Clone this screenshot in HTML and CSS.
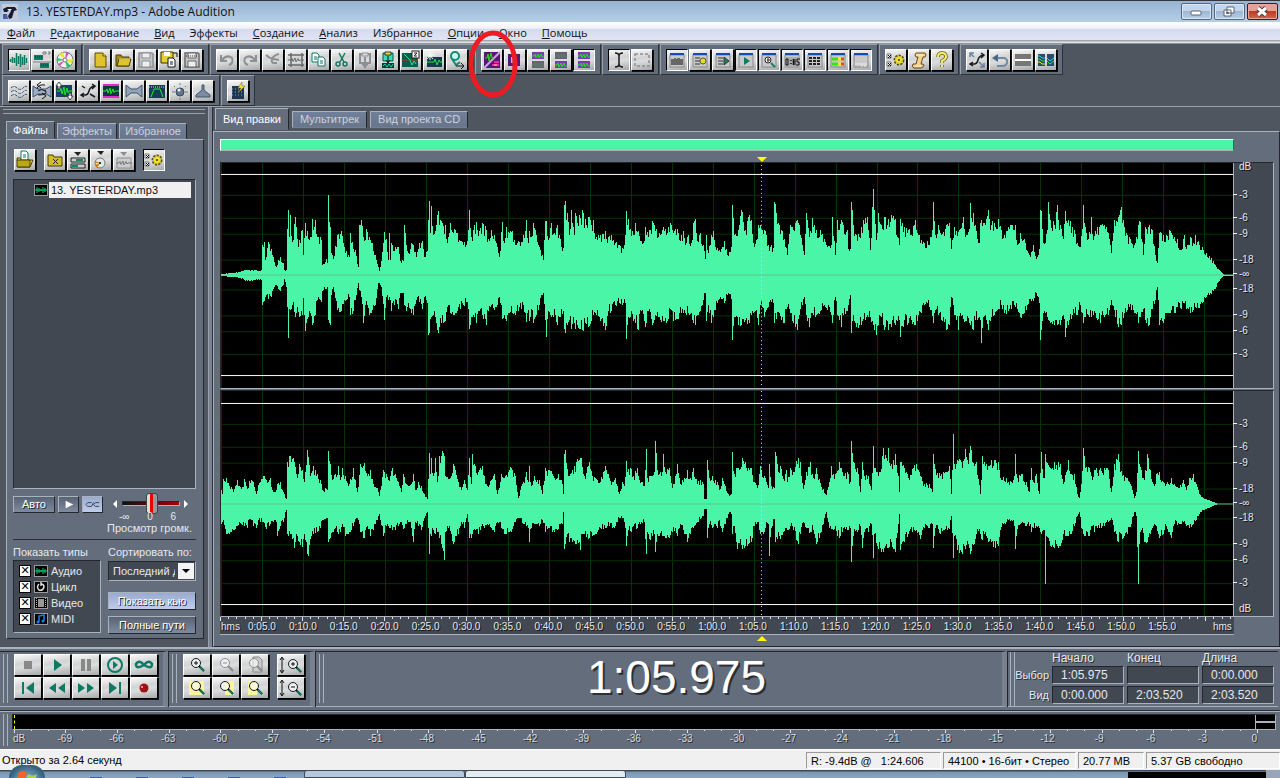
FILE: index.html
```html
<!DOCTYPE html>
<html lang="ru">
<head>
<meta charset="utf-8">
<title>13. YESTERDAY.mp3 - Adobe Audition</title>
<link rel="stylesheet" href="styles.css">
</head>
<body>
<header class="titlebar">
  <svg class="app-icon" viewBox="0 0 16 16"><rect width="16" height="16" fill="#c5ccd9"/><path d="M1 5l4-2h8l2 3-3 1-2 7-3 1-1-3 3-5-2-1-2 2-3 0z" fill="#151b36"/><path d="M1 10h4l1 5H1z" fill="#4a5d9b"/><path d="M5 5l5 0-2 2z" fill="#fff"/></svg>
  <h1 class="title">13. YESTERDAY.mp3 - Adobe Audition</h1>
  <div class="window-buttons">
    <button class="win" aria-label="Свернуть"><svg viewBox="0 0 28 15"><rect x="9" y="7" width="10" height="4" rx="1" fill="#fff" stroke="#5b6376"/></svg></button>
    <button class="win" aria-label="Развернуть"><svg viewBox="0 0 28 15"><path d="M12 3h7v6h-7zM9 6h7v6H9z" fill="#fff" stroke="#5b6376"/><path d="M11.500 8.500h2v1h-2z" stroke="#5b6376"/></svg></button>
    <button class="win win-close" aria-label="Закрыть"><svg viewBox="0 0 28 15"><path d="M10 4l8 7M18 4l-8 7" stroke="#5c3038" stroke-width="5"/><path d="M10 4l8 7M18 4l-8 7" stroke="#fff" stroke-width="3"/></svg></button>
  </div>
</header>
<nav class="menu">
  <button><u>Ф</u>айл</button><button><u>Р</u>едактирование</button><button><u>В</u>ид</button><button>Эффекты</button><button><u>С</u>оздание</button><button><u>А</u>нализ</button><button>Избранное</button><button><u>О</u>пции</button><button><u>О</u>кно</button><button><u>П</u>омощь</button>
</nav>
<div class="toolbars">
  <div class="toolbar" id="toolbar-main"></div>
  <div class="toolbar" id="toolbar-effects"></div>
  <svg class="callout" viewBox="0 0 50 68"><ellipse cx="25" cy="34" rx="22" ry="31" fill="none" stroke="#ed1c24" stroke-width="5"/></svg>
</div>
<main class="workspace">
  <aside class="organizer">
    <div class="grip-h"></div>
    <div class="tabs side-tabs"><button class="tab active">Файлы</button><button class="tab">Эффекты</button><button class="tab">Избранное</button></div>
    <div class="side-body">
      <div class="file-tools" id="file-tools"></div>
      <div class="file-list"><div class="file-row"><span class="type-icon" data-icon="audio"></span><span class="file-name">13. YESTERDAY.mp3</span></div></div>
      <div class="preview">
        <button class="flat auto">Авто</button>
        <button class="flat play" aria-label="Воспроизвести"><svg viewBox="0 0 20 14"><path d="M7 3l8 4-8 4z" fill="#fff"/></svg></button>
        <button class="flat bright loop" aria-label="Цикл"><svg viewBox="0 0 20 14"><path d="M9 5H5L3 7l2 2h4M9 9l2-4M17 5h-4l-2 2 2 2h4" fill="none" stroke="#34415f"/></svg></button>
        <div class="volume">
          <div class="volume-row"><span class="arrow left"></span><input type="range" id="vol" min="0" max="100" value="54"><span class="arrow right"></span></div>
          <div class="volume-marks"><span>-∞</span><span>0</span><span>6</span></div>
          <label for="vol">Просмотр громк.</label>
        </div>
      </div>
      <div class="filters">
        <fieldset class="types">
          <legend>Показать типы</legend>
          <div class="type-box">
            <label><input type="checkbox" checked><span class="type-icon" data-icon="audio"></span>Аудио</label>
            <label><input type="checkbox" checked><span class="type-icon" data-icon="loop"></span>Цикл</label>
            <label><input type="checkbox" checked><span class="type-icon" data-icon="video"></span>Видео</label>
            <label><input type="checkbox" checked><span class="type-icon" data-icon="midi"></span>MIDI</label>
          </div>
        </fieldset>
        <div class="sort">
          <label for="sort">Сортировать по:</label>
          <div class="select-wrap"><select id="sort"><option>Последний доступ</option></select><span class="select-arrow"></span></div>
          <button class="flat bright">Показать кью</button>
          <button class="flat">Полные пути</button>
        </div>
      </div>
    </div>
  </aside>
  <div class="splitter"></div>
  <section class="editor">
    <div class="tabs view-tabs"><button class="tab active">Вид правки</button><button class="tab">Мультитрек</button><button class="tab">Вид проекта CD</button></div>
    <div class="view">
      <div class="overview"></div>
      <div class="marker-row"><span class="marker down"></span></div>
      <div class="tracks">
        <div class="track"><svg class="wave" id="wave-left" viewBox="0 0 1012 226" preserveAspectRatio="none"></svg><div class="db-scale upper" id="scale-left"></div></div>
        <div class="track"><svg class="wave" id="wave-right" viewBox="0 0 1012 226" preserveAspectRatio="none"></svg><div class="db-scale lower" id="scale-right"></div></div>
      </div>
      <div class="time-ruler"><svg id="time-ticks" viewBox="0 0 1012 5" preserveAspectRatio="none"></svg><div class="time-labels" id="time-labels"></div></div>
      <div class="marker-row"><span class="marker up"></span></div>
    </div>
  </section>
</main>
<section class="dock">
  <div class="panel"><span class="grip-v"></span><div class="transport" id="transport"></div></div>
  <div class="panel"><span class="grip-v"></span><div class="zooms" id="zooms"></div><div class="zooms-v" id="zooms-v"></div></div>
  <div class="panel clock-panel"><span class="grip-v"></span><output class="clock">1:05.975</output></div>
  <div class="panel selection-panel"><span class="grip-v"></span>
    <table class="selection">
      <tr><td></td><th id="c1">Начало</th><th id="c2">Конец</th><th id="c3">Длина</th></tr>
      <tr><th class="side" id="r1">Выбор</th><td><input aria-labelledby="r1 c1" value="1:05.975"></td><td><input aria-labelledby="r1 c2" value=""></td><td><input aria-labelledby="r1 c3" value="0:00.000"></td></tr>
      <tr><th class="side" id="r2">Вид</th><td><input aria-labelledby="r2 c1" value="0:00.000"></td><td><input aria-labelledby="r2 c2" value="2:03.520"></td><td><input aria-labelledby="r2 c3" value="2:03.520"></td></tr>
    </table>
  </div>
</section>
<section class="levels">
  <span class="grip-v"></span>
  <div class="level-body">
    <div class="meter"><span class="meter-start"></span><span class="clip"></span></div>
    <svg id="level-ticks" viewBox="0 0 1266 4" preserveAspectRatio="none"></svg>
    <div class="level-labels" id="level-labels"></div>
  </div>
</section>
<footer class="status">
  <span class="status-main">Открыто за 2.64 секунд</span>
  <span class="cell level">R: -9.4dB @ &nbsp; 1:24.606</span><span class="cell format">44100 • 16-бит • Стерео</span><span class="cell size">20.77 MB</span><span class="cell free">5.37 GB свободно</span>
</footer>
<div class="taskbar">
  <span class="orb"><svg viewBox="0 0 36 36"><path d="M9 8q5-4 9 0l-2 9q-5-3-9 0z" fill="#f0642c"/><path d="M19 9q5 3 9 0l-2 9q-5 3-9 0z" fill="#a9d24b"/></svg></span>
  <span class="quick"><i></i><i></i><i></i><i></i><i></i></span><span class="task"></span><span class="task lit"></span><span class="task-dots"></span><span class="tray"></span><span class="tray-end"></span>
</div>
<script src="app.js"></script>
</body>
</html>
```
FILE: styles.css
```css
* { box-sizing: border-box; }
body { margin: 0; height: 100vh; display: flex; flex-direction: column; overflow: hidden; background: #636d7b; color: #e6e9ee; font: 11px/12px "Liberation Sans", Arial, sans-serif; }
button, input, select { font: inherit; color: inherit; margin: 0; padding: 0; border: 0; background: none; border-radius: 0; }
svg { display: block; }

.titlebar { flex: none; display: flex; align-items: center; height: 22px; border-top: 1px solid #35363c; padding: 0 2px; background: linear-gradient(#96b3d2, #b6cee7); color: #111; }
.app-icon { width: 16px; height: 16px; }
.title { flex: 1; margin: 0 0 0 8px; font: 12px/18px "Open Sans", sans-serif; }
.window-buttons { display: flex; gap: 2px; }
.win { width: 31px; height: 17px; border: 1px solid #56677f; border-radius: 2px; box-shadow: inset 0 0 0 1px #d9e6f4; background: linear-gradient(#c3d5ea 45%, #9db7d4 50%, #b8d0e8); }
.win svg { width: 28px; height: 15px; }
.win-close { border-color: #4b1418; box-shadow: inset 0 0 0 1px #e7a99e; background: linear-gradient(#e0a395 45%, #bf3b24 50%, #cf6a4c); }

.menu { flex: none; display: flex; gap: 15px; height: 22px; padding: 0 7px; background: linear-gradient(#ffffff, #eef1f8 30%, #d5dbee 35%, #dfe4f5 85%, #a0a4ac 88%, #f2f2f2); color: #111; border-bottom: 1px solid #8e939a; }
.menu button { font: 11px/18px "Open Sans", sans-serif; white-space: nowrap; }

.toolbars { flex: none; position: relative; background: #505660; border-bottom: 1px solid #9aa1ab; }
.toolbar { display: flex; gap: 1px; padding-left: 2px; height: 31px; }
.group { display: flex; gap: 1px; height: 31px; padding: 4px 5px; border: 1px solid; border-color: #98a0ac #2d3138 #2d3138 #98a0ac; background: #636d7b; }
.tool { width: 22px; height: 22px; border: 1px solid; border-color: #fff #000 #000 #fff; background: linear-gradient(170deg, #f8f8f8, #d2d3d4 40%, #dcdddd 55%, #a8a9ab); box-shadow: 1px 1px 0 #111; }
.tool svg { width: 20px; height: 20px; }
.tool.on { border-color: #000 #fff #fff #000; box-shadow: none; }
.callout { position: absolute; left: 468px; top: -14px; width: 50px; height: 68px; z-index: 3; }

.workspace { flex: 1; min-height: 0; display: flex; background: #505660; }
.organizer { width: 208px; display: flex; flex-direction: column; padding: 2px 3px 8px 3px; }
.grip-h { flex: none; height: 5px; border: solid #9aa1ab; border-width: 1px 0; margin-bottom: 7px; }
.tabs { display: flex; align-items: flex-end; }
.tab { height: 16px; border: 1px solid; border-color: #aab2be #23272d transparent #aab2be; background: linear-gradient(#71809a, #68758a); color: #ccd2dc; line-height: 15px; white-space: nowrap; text-align: center; }
.tab.active { background: #636d7b; color: #fff; border-bottom-color: #636d7b; }
.side-tabs { gap: 2px; padding-left: 3px; }
.side-tabs .tab { flex: 0 0 60px; }
.side-tabs .active { flex-basis: 49px; height: 18px; }
.side-tabs .tab:last-child { flex-basis: 68px; }
.side-body { flex: 1; min-height: 0; display: flex; flex-direction: column; margin-left: 3px; margin-right: 1px; padding: 9px 7px 4px 6px; background: #636d7b; border: 1px solid; border-color: #aab2be #23272d #23272d #aab2be; }
.file-tools { display: flex; gap: 1px; height: 30px; padding-left: 1px; }
.file-tools .tool:first-child { margin-right: 7px; }
.file-tools .tool:last-child { margin-left: 7px; }
.file-list { flex: 1; background: #424851; border: 1px solid; border-color: #23272d #aab2be #aab2be #23272d; padding: 2px 4px 2px 20px; }
.file-row { display: flex; align-items: center; gap: 1px; }
.file-name { flex: 1; background: #f0f0f0; color: #111; line-height: 16px; padding-left: 2px; white-space: nowrap; }
.type-icon { flex: none; width: 14px; height: 12px; border: 1px solid #999; background: #000; }
.type-icon svg { width: 12px; height: 10px; }
.preview { display: flex; align-items: flex-start; gap: 3px; padding-top: 7px; height: 51px; border-bottom: 1px solid #2b2f36; }
.flat { height: 17px; border: 1px solid; border-color: #aab2be #23272d #23272d #aab2be; background: linear-gradient(#596373, #7e8aa0); color: #fff; text-shadow: 1px 1px 0 #23272d; line-height: 15px; }
.flat.bright { background: linear-gradient(#9aabcf, #bfcdea); }
.auto { width: 42px; }
.play, .loop { width: 21px; }
.flat svg { width: 19px; height: 15px; }
.volume { flex: 1; padding-left: 3px; }
.volume label { display: block; white-space: nowrap; margin-left: -2px; margin-top: 2px; }
.volume-row { display: flex; align-items: center; justify-content: space-between; height: 15px; padding: 0 8px 0 4px; }
.arrow { border: 4px solid transparent; width: 0; }
.arrow.left { border-right-color: #fff; border-left: 0; }
.arrow.right { border-left-color: #fff; border-right: 0; }
.volume input { appearance: none; width: 58px; height: 5px; border: 1px solid; border-color: #23272d #aab2be #aab2be #23272d; background: linear-gradient(90deg, #111, #a00); }
.volume input::-webkit-slider-thumb { appearance: none; width: 12px; height: 21px; border: 1px solid #444; border-radius: 3px; background: linear-gradient(90deg, #ddd 35%, #e00 35%, #e00 65%, #999 65%); }
.volume-marks { display: flex; justify-content: space-between; padding: 0 20px 0 10px; font-size: 10px; height: 9px; line-height: 12px; }
.filters { display: grid; grid-template-columns: 88px 1fr; gap: 7px; padding-top: 6px; }
.types { margin: 0; padding: 0; border: 0; min-width: 0; }
.types legend { padding: 0; line-height: 12px; margin-bottom: 2px; white-space: nowrap; }
.type-box { padding: 2px 5px; height: 73px; background: #424851; border: 1px solid; border-color: #23272d #aab2be #aab2be #23272d; }
.type-box label { display: flex; align-items: center; height: 16px; gap: 3px; }
.type-box input { appearance: none; width: 12px; height: 12px; border: 1px solid #000; background: #fff; display: grid; place-items: center; }
.type-box input:checked::before { content: "✕"; color: #000; font: bold 11px/10px "DejaVu Sans", sans-serif; }
.sort { display: flex; flex-direction: column; min-width: 0; }
.sort > label { white-space: nowrap; margin-bottom: 3px; }
.select-wrap { position: relative; height: 20px; margin-bottom: 11px; }
.sort select { appearance: none; width: 100%; height: 20px; padding: 0 20px 0 4px; background: #424851; border: 1px solid; border-color: #23272d #aab2be #aab2be #23272d; }
.select-arrow { position: absolute; right: 2px; top: 2px; width: 16px; height: 16px; background: #f4f4f4; pointer-events: none; }
.select-arrow::after { content: ""; position: absolute; left: 4px; top: 6px; border: 4px solid transparent; border-top-color: #000; }
.sort .flat { height: 18px; margin-bottom: 6px; }
.sort .flat:last-child { margin-bottom: 0; }

.splitter { flex: none; width: 5px; border: solid #9aa1ab; border-width: 0 1px; border-right-color: #2b2f36; background: #798391; }
.editor { flex: 1; min-width: 0; display: flex; flex-direction: column; }
.view-tabs { height: 24px; padding-left: 2px; gap: 3px; padding-bottom: 1px; }
.view-tabs .tab { height: 17px; padding: 0 7px; flex: none; margin-bottom: 2px; }
.view-tabs .active { height: 22px; line-height: 20px; margin-bottom: 0; }
.view { flex: 1; min-height: 0; display: flex; flex-direction: column; border: 1px solid; border-color: #aab2be #23272d #23272d #aab2be; background: #636d7b; padding: 7px 5px 0 6px; }
.overview { height: 12px; margin-right: 40px; border: 1px solid; border-color: #e6fff4 #0b7d4f #aab2be #fff; background: #4bf5a8; }
.marker-row { height: 11px; display: flex; margin-right: 40px; }
.marker { border: 5px solid transparent; height: 0; margin-left: calc(53.5% - 5px); }
.marker.down { border-top-color: #ffff00; border-bottom: 0; align-self: flex-end; }
.marker.up { border-bottom-color: #ffff00; border-top: 0; margin-top: 1px; }
.tracks { flex: 1; min-height: 0; display: grid; grid-template-rows: 1fr 1fr; gap: 1px; }
.track { display: grid; grid-template-columns: minmax(0, 1fr) 40px; min-height: 0; border: 1px solid; border-color: #23272d #aab2be #aab2be #23272d; }
.wave { width: 100%; height: 100%; background: #000; min-height: 0; }
.db-scale { display: grid; min-height: 0; background: linear-gradient(90deg, #aab2be 1px, #424851 1px); font-size: 10px; line-height: 12px; text-shadow: 1px 1px 0 #111; }
.upper { grid-template-rows: 10fr 28fr 23fr 16fr 26fr 15fr 15fr 26fr 16fr 23fr 28fr; }
.lower { grid-template-rows: 39fr 23fr 16fr 26fr 15fr 15fr 26fr 16fr 23fr 26fr 1fr; }
.db-scale span { display: flex; align-items: flex-end; min-height: 0; height: 100%; padding-left: 6px; }
.db-scale .tick { padding-left: 0; gap: 2px; align-items: flex-end; }
.db-scale .tick::before { content: ""; width: 4px; height: 1px; background: #fff; margin-bottom: 6px; }
.time-ruler { height: 18px; margin-right: 40px; background: #424851; border-bottom: 1px solid #aab2be; }
.time-ruler svg { width: 100%; height: 5px; }
.time-labels { display: flex; font-size: 10px; line-height: 10px; text-shadow: 1px 1px 0 #111; text-align: center; white-space: nowrap; }
.time-labels span { flex: 4097 0 0; min-width: 0; }
.time-labels .first { flex-grow: 2048; text-align: left; padding-left: 1px; }
.time-labels .last { flex-grow: 4925; text-align: right; padding-right: 2px; }

.dock { flex: none; display: flex; height: 64px; padding: 2px 1px 3px 0; border-top: 2px solid #aab2be; border-bottom: 1px solid #2b2f36; }
.panel { display: flex; padding: 2px 5px 3px 3px; border: solid; border-width: 1px 5px 1px 0; border-color: #23272d #78828f #aab2be; box-shadow: 1px 0 0 #23272d; margin-right: 1px; }
.grip-v { flex: none; width: 5px; border: solid #aab2be; border-width: 0 1px; margin: 0 6px 0 0; }
.transport, .zooms { display: grid; grid-template-columns: repeat(5, 28px); gap: 1px; height: 45px; }
.zooms { grid-template-columns: repeat(3, 28px); }
.zooms-v { display: grid; gap: 1px; margin-left: 8px; width: 28px; height: 45px; }
.dock .tool { width: 28px; height: 22px; }
.dock .tool svg { width: 26px; height: 20px; }
.clock-panel { flex: 1; }
.clock { flex: 1; text-align: center; padding-left: 26px; font-size: 46px; line-height: 46px; color: #fff; text-shadow: 2px 2px 0 #2b2f36; }
.selection-panel { border-right: 0; padding: 0 4px 0 2px; box-shadow: none; }
.selection-panel .grip-v { margin-right: 0; }
.selection { border-spacing: 0; font-size: 12px; }
.selection th, .selection td { padding: 0 0 2px 3px; font-weight: normal; text-align: left; line-height: 12px; text-shadow: 1px 1px 0 #2b2f36; }
.selection .side { width: 34px; text-align: right; padding-left: 0; font-size: 11px; }
.selection input { display: block; width: 72px; height: 18px; padding-left: 8px; font-size: 12px; background: #424851; border: 1px solid; border-color: #23272d #aab2be #aab2be #23272d; }

.levels { flex: none; display: flex; height: 38px; padding: 2px 0 3px 3px; border-top: 1px solid #aab2be; }
.levels .grip-v { margin-right: 4px; }
.level-body { flex: 1; }
.meter { display: flex; justify-content: space-between; height: 16px; margin-right: 4px; padding-left: 1px; background: #000; border: 1px solid; border-color: #23272d #aab2be #aab2be #23272d; }
.meter-start { border-left: 1px dashed #ff0; }
.clip { width: 20px; border-left: 1px solid #aab2be; background: linear-gradient(#000 6px, #aab2be 6px, #aab2be 8px, #000 8px); }
.levels svg { width: 100%; height: 4px; }
.level-labels { display: flex; font-size: 10px; line-height: 10px; color: #d5dae2; text-shadow: 1px 1px 0 #2b2f36; text-align: center; padding-left: 1px; }
.level-labels span { flex: 2 0 0; }
.level-labels .first { flex-grow: 1; text-align: left; }

.status { flex: none; display: flex; height: 21px; gap: 2px; padding-top: 2px; background: #f0f0f0; border-top: 1px solid #fff; color: #000; line-height: 16px; }
.status-main { flex: 1; padding-left: 2px; }
.cell { height: 17px; padding-left: 4px; border: 1px solid; border-color: #9a9a9a #fff #fff #9a9a9a; white-space: nowrap; }
.level { width: 135px; }
.format { width: 133px; }
.size { width: 66px; }
.free { width: 134px; }
.taskbar { flex: none; position: relative; display: flex; height: 8px; background: linear-gradient(#3c4a5a 1px, #7b96b3 2px, #8ca6c2); }
.orb { position: absolute; left: 9px; top: -5px; width: 36px; height: 13px; overflow: hidden; border-radius: 18px 18px 0 0; background: radial-gradient(circle at 50% 18px, #9cc8e8, #35617f 18px); }
.quick { width: 304px; padding: 7px 0 0 90px; display: flex; gap: 34px; }
.quick i { width: 12px; height: 1px; background: #345caa; }
.task { width: 161px; border: 1px solid #3c4a5a; border-radius: 3px 3px 0 0; background: #b5c7da; }
.task.lit { background: #e3ebf3; }
.task-dots { flex: 1; background: linear-gradient(#3c4a5a 1px, transparent 1px); }
.tray { width: 138px; margin-top: 1px; background: #000; border-top: 1px solid #8a6a50; }
.tray-end { width: 14px; background: #98a6b5; }
```
FILE: app.js
```js
// Icons: toolbar glyphs on a 20x20 grid
const G = '#8d8f92', T = '#0e7a63', K = '#16191e', N = '#33506f';
const page = (x, y, c, f = '#fff') => `<path d="M${x} ${y}h5l2 2v7h-7z" fill="${f}" stroke="${c}"/><path d="M${x + 2} ${y + 4}h3M${x + 2} ${y + 6}h3" stroke="${c}"/>`;
const zig = (c, y = 10, s = 1) => `<path d="M2 ${y}h3l1-${3 * s} 1 ${6 * s} 2-${7 * s} 1 ${8 * s} 2-${7 * s} 1 ${5 * s} 1-${2 * s}h4" fill="none" stroke="${c}"/>`;
const win = inner => `<rect x="3" y="5" width="14" height="12" fill="#c9c9c9" stroke="#888"/><rect x="3" y="3" width="14" height="2" fill="#164bb0"/>${inner}`;
const bars = (a, b) => `<rect x="4" y="2" width="12" height="7" fill="${a ? '#7a3bb0' : '#696078'}"/><rect x="4" y="11" width="12" height="7" fill="${b ? '#7a3bb0' : '#696078'}"/><g fill="none" stroke="#17e817"><path d="M4 6h2l1-2 1 4 2-4 1 4 2-4 1 3h2" opacity="${a ? 1 : .25}"/><path d="M4 15h2l1-2 1 4 2-4 1 4 2-4 1 3h2" opacity="${b ? 1 : .25}"/></g>`;
const lens = (c, h = T) => `<circle cx="9" cy="8" r="4.500" fill="#fff" fill-opacity=".6" stroke="${c}"/><path d="M12 11l5 5" stroke="${c}" stroke-width="2"/><path d="M13 12l4 4" stroke="${h}" stroke-width="2"/>`;
const gear = (x, y) => `<circle cx="${x}" cy="${y}" r="4" fill="none" stroke="#5a5200" stroke-width="3" stroke-dasharray="2 1"/><circle cx="${x}" cy="${y}" r="3.500" fill="#f4e32a" stroke="#d8c71c"/><circle cx="${x}" cy="${y}" r="1" fill="#333"/>`;
const checks = `<path d="M1 4h4v4H1zM1 12h4v4H1z" fill="#fff" stroke="#777"/><path d="M2 5l3 3M5 5L2 8M2 13l3 3M5 13l-3 3" stroke="#111"/>`;
const disk = (c, f) => `<path d="M3 3h13l1 1v13H3z" fill="${f}" stroke="${c}" stroke-width="1.500"/><path d="M6 3h8v5H6zM6 11h8v6H6z" fill="#eee" stroke="${c}"/>`;
const clip = c => `<path d="M5 4h10v9H5z" fill="none" stroke="${c}" stroke-width="2"/><path d="M7 3h6v3H7z" fill="#ddd" stroke="${c}"/>`;
const icons = {
  wave: `<path d="M1.500 9v3M3.500 7v6M5.500 8v5M7.500 3v13M9.500 6v8M11.500 4v13M13.500 7v8M15.500 5v10M17.500 8v5" stroke="${T}" stroke-width="1.500"/>`,
  multi: `<path d="M2 5h9v5H2zM8 13h9v5H8z" fill="${T}"/><path d="M3 7h7M9 15h7" stroke="#05372d" stroke-dasharray="1 1"/><path d="M1 12h18M11 2h3v2h-3zM16 2h2v2h-2" stroke="#777" fill="none"/>`,
  cd: '<circle cx="10" cy="10" r="8" fill="#f0f0f2" stroke="#777"/><path d="M10 10L4 4l4-2zM10 10l8-1-1 5z" fill="#e7e72e"/><path d="M10 10l-8-2v3zM10 10l6 6-4 2z" fill="#25c765"/><path d="M10 10l1-8 3 1zM10 10l-5 6-2-2z" fill="#d84cc8"/><circle cx="10" cy="10" r="2" fill="#fff" stroke="#777"/>',
  new: '<path d="M5 3h8l3 3v11H5z" fill="#dfc22d" stroke="#5c4a00"/><path d="M13 3v3h3" fill="#fff4a0" stroke="#5c4a00"/>',
  open: '<path d="M3 5h5l1 2h7v9H3z" fill="#a38b12" stroke="#4a3d00"/><path d="M6 9h12l-2 7H4z" fill="#dcc52d" stroke="#4a3d00"/><path d="M6 9h11" stroke="#fff48b"/>',
  save: disk(G, '#c4c4c4'),
  saveas: '<path d="M2 2h12v11H2z" fill="#e3cf2d" stroke="#3a3200"/><path d="M5 2h6v4H5z" fill="#fff"/>' + page(9, 8, K) + '<path d="M14 3h4v4" fill="none" stroke="#111"/>',
  saveall: disk('#68696b', '#c4c4c4') + '<path d="M4 6h12" stroke="#333" stroke-dasharray="1 1"/>',
  undo: `<path d="M4 5v6h6M5 10q5-6 10-2 2 5-3 7" fill="none" stroke="${G}" stroke-width="2"/>`,
  redo: `<path d="M16 5v6h-6M15 10q-5-6-10-2-2 5 3 7" fill="none" stroke="${G}" stroke-width="2"/>`,
  trimcut: `<path d="M3 5q3 3 7 4l6 1M16 4q-5 1-7 5-1 4 2 4h3" fill="none" stroke="${G}" stroke-width="2"/>`,
  crop: `<path d="M5 3v14M2 5h16M16 3v14M2 15h16" fill="none" stroke="#68696b" stroke-width="1.500"/>${zig('#68696b', 10, .5)}`,
  copy: page(3, 3, T) + page(9, 7, T),
  cut: `<path d="M7 3l5 9M13 3l-5 9" stroke="${T}" stroke-width="1.500"/><circle cx="6" cy="14" r="2" fill="none" stroke="${T}" stroke-width="1.500"/><circle cx="13" cy="14" r="2" fill="none" stroke="${T}" stroke-width="1.500"/>`,
  paste: clip(G) + `<path d="M10 7v9M7 13l3 4 3-4" fill="none" stroke="${G}" stroke-width="2"/>`,
  pastemix: '<path d="M5 3h10v8H5z" fill="#39d9ba" stroke="#0a5949"/><path d="M7 2h6v3H7z" fill="#ece03c" stroke="#333"/><rect x="4" y="13" width="12" height="5" fill="#073f34"/><path d="M5 16l2-2 2 3 2-3 2 3 2-3" fill="none" stroke="#16d39c"/><path d="M10 6v7M8 10l2 3 2-3" stroke="#111" fill="none"/>',
  zero: '<rect x="1" y="3" width="16" height="14" fill="#045f4c"/><path d="M1 10h16" stroke="#d52020"/><path d="M3 4l6 6 2 5 2-4 2 3" fill="none" stroke="#25e97f"/><rect x="11" y="1" width="7" height="7" fill="#fff" stroke="#222"/><path d="M13 3h3l-3 3h3" fill="none" stroke="#222"/>',
  spark: '<rect x="3" y="7" width="15" height="10" fill="#173950"/><path d="M3 12h7l1-3 2 6 2-5 1 2h2" fill="none" stroke="#17e837"/><path d="M6 1v9M1 5h10M3 2l6 7M9 2L3 9" stroke="#eafff8"/>',
  favgo: '<circle cx="8" cy="6" r="4" fill="#c7fff2" stroke="#168b73" stroke-width="2"/><path d="M5 9l4 6 4-3" fill="none" stroke="#168b73" stroke-width="2"/><path d="M9 16h8l-3-3M17 16l-3 3" fill="none" stroke="#111"/>',
  toggle: '<rect x="2" y="2" width="16" height="16" fill="#55196e"/><path d="M2 18L18 2" stroke="#c9a6dd" stroke-width="2"/><path d="M3 8h2l1-4 1 7 2-8 1 5h2" fill="none" stroke="#17e817"/><path d="M10 15h7M12 12h5" stroke="#f51dbb" stroke-width="2"/><path d="M12 15h3" stroke="#f4e52a"/>',
  spec: '<rect x="3" y="4" width="12" height="12" fill="#55196e"/><rect x="6" y="7" width="6" height="6" fill="#cba8dd"/>',
  left: bars(1, 0), right: bars(0, 1), both: bars(1, 1),
  ibeam: `<path d="M6 3q4 0 4 3v8q0 3-4 3M14 3q-4 0-4 3v8q0 3 4 3" fill="none" stroke="${K}" stroke-width="1.500"/>`,
  marquee: `<path d="M3 4h14v12H3z" fill="none" stroke="${G}" stroke-width="1.500" stroke-dasharray="3 2"/>`,
  w1: win('<path d="M4 9h3V8h2v1h1V8h3v1h3v6H4z" fill="#666"/>'),
  w2: win('<path d="M5 8h5M5 11h5M5 14h5" stroke="#333"/><circle cx="13" cy="11" r="3" fill="#e8dd25" stroke="#555"/>'),
  w3: win('<path d="M5 8h5M5 11h5M5 14h5" stroke="#333"/><path d="M11 7l5 4-5 4z" fill="#128365" stroke="#333"/>'),
  w4: win(`<path d="M8 7l6 4-6 4z" fill="${T}"/>`),
  w5: win('<circle cx="9" cy="10" r="3" fill="#fff" stroke="#222"/><path d="M8 10h3M9 8v4" stroke="#222"/><path d="M12 13l4 4" stroke="#128365" stroke-width="2"/>'),
  w6: win('<rect x="2" y="7" width="16" height="10" fill="#aaa"/><path d="M4 9h2v6H4zM13 9v6M18 9h-3v3h2v3h-3" fill="none" stroke="#111"/><path d="M9 10v1M9 13v1M11.500 9v6" stroke="#111" stroke-width="1.500"/>'),
  w7: win('<path d="M4 8h12M4 11h12M4 14h12" stroke="#222" stroke-width="2" stroke-dasharray="3 1"/>'),
  w8: win('<path d="M4 9h6M4 14h6" stroke="#35e510" stroke-width="3"/><path d="M10 9h3M10 14h3" stroke="#eded22" stroke-width="3"/><path d="M13 9h3M13 14h3" stroke="#ed4d22" stroke-width="3"/>'),
  w9: win('<path d="M4 14h12" stroke="#eee"/><path d="M10 16h6" stroke="#eee" stroke-dasharray="2 1"/>'),
  prefs: checks + gear(13, 10),
  script: '<path d="M7 3h9q2 2 0 4h-2l-2 7q3 0 3 1-1 3-3 3H5q-3-1-1-4h3l2-7H7q-2-2 0-4z" fill="#f1d28f" stroke="#6a461d"/><path d="M7 5h7M6 16h6" stroke="#fff1c9"/>',
  help: '<path d="M6 7q0-4 4-4t4 4q0 2-4 4v2M10 15v2" fill="none" stroke="#6b6300" stroke-width="3.500"/><path d="M6 7q0-4 4-4t4 4q0 2-4 4v2M10 15v2" fill="none" stroke="#f4ee7c" stroke-width="2"/>',
  curve: `<path d="M4 14h3q3 0 4-4t5-5M14 3l3 2-3 3M6 12l-3 2 3 2" fill="none" stroke="${K}" stroke-width="1.500"/><path d="M4 4l3 3M3 7V3h4M12 12l5 5M17 13v4h-4" fill="none" stroke="#68809d" stroke-width="1.500"/>`,
  back: '<path d="M8 4v8L2 8z" fill="#466a8e"/><path d="M8 8h6q4 1 3 5-1 3-4 3H7" fill="none" stroke="#7289a4" stroke-width="2"/>',
  flatline: '<rect x="2" y="4" width="16" height="12" fill="#777"/><path d="M2 10h16" stroke="#fff" stroke-width="2"/>',
  colorwaves: '<path d="M2 4h7v12H2zM11 4h7v12h-7z" fill="#284d6c"/><g fill="none"><path d="M2 6h2l2 2h3M11 8l3 3 4-3" stroke="#24cde5"/><path d="M2 9h2l2 2h3M11 11l3 3 4-3" stroke="#26df46"/><path d="M2 12h2l2 2h3" stroke="#ecec26"/></g>',
  ripples: `<path d="M2 7q3-3 6 0t6 0 4-1M2 11q3-3 6 0t6 0 4-1M2 15q3-3 6 0t6 0 4-1" fill="none" stroke="${N}" stroke-dasharray="3 1"/>`,
  swirl: '<path d="M1 5l5 3h8l5-3v11l-5-3H6l-5 3z" fill="#9cadc4" stroke="#40546e"/><path d="M5 8q1-5 8-4M13 9q4 5-7 5M9 1L5 4l4 3M10 12l4 3-4 3M6 10q4-3 7 0" fill="none" stroke="#111"/>',
  amp: '<rect x="1" y="4" width="16" height="12" fill="#1a425f"/>' + zig('#14ec22') + '<path d="M4 1l3 4H5v3H3V5H1zM15 19l3-4h-2v-3h-2v3h-2z" fill="#fff" stroke="#444"/>',
  curve2: `<path d="M4 14h3q3 0 4-4t5-5M14 3l3 2-3 3M6 12l-3 2 3 2M4 5l3 2M12 13l5 3" fill="none" stroke="${K}" stroke-width="1.500"/>`,
  gate: '<rect x="2" y="4" width="16" height="12" fill="#143443"/><path d="M2 4h16M2 16h16" stroke="#e626d4" stroke-width="2"/>' + zig('#17ef2c', 10, .7),
  bowtie: '<path d="M2 4l5 4h6l5-4v12l-5-4H7l-5 4z" fill="#91a3b9" stroke="#40546e"/>',
  eq: '<rect x="2" y="4" width="16" height="13" fill="#173c56"/><path d="M2 6h16" stroke="#edea23" stroke-dasharray="1 1"/><path d="M4 16l3-8h6l3 8" fill="none" stroke="#17ef2c"/>',
  orb: '<circle cx="10" cy="11" r="4" fill="#62758a" stroke="#33475d"/><circle cx="9" cy="9" r="1.500" fill="#f1f4f7"/><path d="M2 11h3M15 11h3M9 3h2M9 18h2M4 5l1 1M15 5l1 1" stroke="#777"/>',
  plunger: '<path d="M9 4h2v5l6 5v2H3v-2l6-5z" fill="#7b8ca2" stroke="#40546e"/>',
  flash: '<rect x="4" y="5" width="12" height="13" fill="#1d3652"/><path d="M4 8h12M4 11h12M4 14h12" stroke="#8da1b7" stroke-dasharray="1 2"/><path d="M14 1l-4 6h3l-3 5 7-7h-3z" fill="#f7e72c" stroke="#6d6310" stroke-width=".5"/>',
  import: '<path d="M2 8h3l2 2h11l-3 7H3z" fill="#efdc3d" stroke="#4a3d00"/>' + page(6, 1, T) + '<path d="M2 10h13v7H2z" fill="#bca719" stroke="#4a3d00"/>',
  closef: '<path d="M3 5h5l1 2h8v9H3z" fill="#cfbe26" stroke="#4a3d00"/><path d="M8 9l5 5M13 9l-5 5" stroke="#222"/>',
  insert: '<path d="M6 2h7l-3 4z" fill="#222"/><path d="M3 8h14v4H3zM3 14h14v4H3z" fill="#ccc" stroke="#222"/><path d="M8 10h7M4 16h6" stroke="#128b62" stroke-width="2"/>',
  insertcd: '<path d="M6 1h7l-3 4z" fill="#222"/><circle cx="9" cy="13" r="5" fill="#e8e6e8" stroke="#777"/><path d="M9 13l-5 2 2 3zM9 13l-5-2v2z" fill="#c78020"/><circle cx="9" cy="13" r="1"/>',
  insertw: `<path d="M6 2h7l-3 4z" fill="${G}"/><path d="M3 8h14v10H3z" fill="#ccc" stroke="${G}"/>${zig('#777', 13, .5)}`,
  stop: '<path d="M6 6h8v8H6z" fill="#888"/>', play: `<path d="M7 4l8 6-8 6z" fill="${T}"/>`, pause: '<path d="M5 4h4v12H5zM11 4h4v12h-4z" fill="#888"/>',
  playloop: `<circle cx="10" cy="10" r="7" fill="none" stroke="${T}" stroke-width="2"/><path d="M8 6l5 4-5 4z" fill="${T}"/>`,
  infinity: `<path d="M10 10Q5 4 2 9q0 6 8 1 5-6 8-1 0 6-8 1z" fill="none" stroke="${T}" stroke-width="2.500"/>`,
  first: `<path d="M4 4h2v12H4zM16 4v12l-8-6z" fill="${T}"/>`, rew: `<path d="M9 5v10l-7-5zM18 5v10l-7-5z" fill="${T}"/>`, fwd: `<path d="M2 5l7 5-7 5zM11 5l7 5-7 5z" fill="${T}"/>`, last: `<path d="M4 4l8 6-8 6zM14 4h2v12h-2z" fill="${T}"/>`,
  rec: '<circle cx="10" cy="10" r="4.500" fill="#a11217"/><circle cx="8" cy="9" r="1" fill="#ffb9b9"/>',
  zin: lens(K) + '<path d="M7 8h4M9 6v4" stroke="#111"/>', zout: lens(G, G) + `<path d="M7 8h4" stroke="${G}"/>`, zfull: '<path d="M8 2h6l3 3v12H8z" fill="#ccc" stroke="#888"/>' + lens(G, G),
  zsel: '<rect x="2" y="3" width="15" height="14" fill="#f8f59a"/>' + lens(K), zleft: '<rect x="9" y="3" width="9" height="14" fill="#f8f59a"/>' + lens(K), zright: '<rect x="3" y="3" width="9" height="14" fill="#f8f59a"/>' + lens(K),
  vin: '<path d="M1 3v14M-1 5l2-3 2 3M-1 15l2 3 2-3" stroke="#111" fill="none"/><g transform="translate(3 1)">' + lens(K) + '<path d="M7 8h4M9 6v4" stroke="#111"/></g>',
  vout: '<path d="M1 3v14M-1 5l2-3 2 3M-1 15l2 3 2-3" stroke="#111" fill="none"/><g transform="translate(3 1)">' + lens(K) + '<path d="M7 8h4" stroke="#111"/></g>'
};
const button = name => {
  const on = name.endsWith('*'), key = name.replace('*', '');
  return `<button class="tool${on ? ' on' : ''}" aria-label="${key}"><svg viewBox="0 0 20 20" overflow="visible">${icons[key]}</svg></button>`;
};
const fill = (id, html) => { document.getElementById(id).innerHTML = html; };
const row = list => list.split(' ').map(button).join('');
const groups = list => list.map(g => `<div class="group">${row(g)}</div>`).join('');

fill('toolbar-main', groups(['wave* multi cd', 'new open save saveas saveall', 'undo redo trimcut crop copy cut paste pastemix zero spark favgo', 'toggle spec left right both*', 'ibeam* marquee', 'w1* w2 w3 w4* w5* w6* w7* w8* w9*', 'prefs script help', 'curve back flatline colorwaves']));
fill('toolbar-effects', groups(['ripples swirl amp curve2 gate bowtie eq orb plunger', 'flash']));
fill('file-tools', row('import closef insert insertcd insertw prefs*'));
fill('transport', row('stop play pause playloop infinity first rew fwd last rec'));
fill('zooms', row('zin zout zfull zsel zleft zright'));
fill('zooms-v', row('vin vout'));

const small = {
  audio: '<path d="M0 5h12M2 2v6M4 3v4M6 4v2M8 2v6M10 3v4" stroke="#10cf75"/>',
  loop: '<path d="M4 2q-3 3 0 6 4 1 5-3 0-3-3-3M6 0v4" fill="none" stroke="#ddd" stroke-width="1.500"/>',
  video: '<rect x="3" y="1" width="6" height="8" fill="#999"/><path d="M1.500 0v10M10.500 0v10" stroke="#bbb" stroke-dasharray="1 1"/>',
  midi: '<path d="M4 8V2l5-1v6" fill="none" stroke="#1680f0" stroke-width="1.500"/><circle cx="3" cy="8" r="1.500" fill="#1680f0"/><circle cx="8" cy="7" r="1.500" fill="#1680f0"/>'
};
document.querySelectorAll('[data-icon]').forEach(el => { el.innerHTML = `<svg viewBox="0 0 12 10">${small[el.dataset.icon]}</svg>`; });

// Peak envelopes: "x:up,down" points, one string per half of the channel
const halves = [{ start: -1, scale: 3 }, { start: 499, scale: 2.8 }];
const peaks = {
  left: ['0:1,1;60:3,3;75:5,6;122:5,5;126:30,30;131:33,26;135:15,22;143:33,24;152:26,22;162:13,12;168:8,10;175:15,14;181:18,16;188:12,10;193:5,4;199:5,12;201:46,32;205:65,63;208:38,34;211:60,35;216:33,30;226:58,42;232:36,32;238:35,42;247:45,40;250:20,23;254:52,56;262:44,44;270:38,38;277:56,50;284:55,40;290:38,25;302:35,27;306:10,16;318:16,14;322:12,12;325:80,45;331:48,50;334:22,20;340:16,12;352:40,35;364:44,36;372:28,25;388:18,22;391:42,40;398:26,36;404:25,25;413:8,8;418:50,15;422:55,22;430:38,48;437:46,26;446:38,40;455:32,35;464:20,30;474:8,8;478:4,8;484:14,12;491:43,45;498:36,22;503:15,25;506:42,22;510:15,25;514:32,36;527:26,25;535:28,34;540:14,18;548:14,18;552:50,30;557:30,36;563:22,28;572:32,38;580:30,40;587:18,25;597:32,27;605:34,34;612:18,22;622:24,28;625:55,60;628:74,58;631:42,44;634:69,42;640:40,40;648:50,48;655:64,58;664:54,48;674:50,46;680:32,32;690:52,38;702:46,40;712:42,36;720:34,34;730:30,30;742:34,27;748:65,54;752:38,42;760:45,40;767:53,48;778:44,36;785:52,40;797:45,50;803:36,36;812:45,30;822:40,35;830:28,30;836:18,22;846:53,44;853:32,40;858:48,46;866:42,38;876:44,38;884:30,40;895:34,36;908:40,30;919:55,47;925:32,35;928:44,46;932:38,34;938:52,48;948:40,40;958:28,30;965:20,20;970:15,18;974:54,45;977:54,62;983:35,36;994:52,42;1004:40,40;1012:50,50;1020:36,42;1029:27,36;1033:70,54;1036:74,58;1040:62,50;1048:40,45;1054:65,54;1062:40,48;1066:62,54;1070:52,50;1078:60,54;1088:62,56;1096:56,48;1105:58,52;1112:50,46;1120:55,40;1128:38,40;1140:40,46;1154:44,55;1164:38,36;1174:40,36;1186:32,30;1196:30,28;1206:27,30;1215:40,28;1219:64,64;1224:56,42;1230:46,42;1238:40,46;1246:52,48;1254:44,55;1264:34,36;1272:34,46;1276:48,52;1285:38,36;1297:54,50;1306:44,40;1320:40,45;1330:48,46;1340:42,46;1351:52,34;1360:42,46;1370:46,44;1384:40,38;1390:44,38;1396:30,38;1405:40,38;1412:32,38;1420:52,48;1424:56,50;1430:34,40;1440:42,36;1450:30,25;1456:16,18;1459:40,46;1465:22,30;1472:40,48;1480:44,42;1486:28,35;1497:25,24',
    '0:23,22;10:34,28;20:20,20;30:28,24;34:70,65;40:40,42;50:45,50;60:65,50;70:45,45;80:60,48;88:55,40;93:32,38;100:35,35;105:50,50;112:50,30;116:45,25;122:45,42;130:40,35;135:30,32;147:27,28;152:73,48;158:62,44;165:50,38;172:45,45;180:36,48;187:20,32;195:50,38;205:45,48;215:55,55;222:50,40;230:30,30;236:20,22;242:62,40;248:38,52;257:57,38;270:45,40;280:45,36;290:36,30;300:28,35;310:30,40;314:58,48;323:20,22;327:55,40;332:45,45;338:55,52;345:50,40;355:45,36;357:26,30;365:26,20;367:73,58;372:50,40;380:40,52;388:38,50;395:48,50;405:57,45;412:58,40;420:25,42;427:86,50;430:65,55;437:35,60;441:62,50;450:50,42;460:58,55;470:56,55;480:60,52;490:56,50;500:30,45;505:56,62;515:48,45;525:45,48;535:40,45;547:55,50;555:40,40;563:35,38;572:32,30;580:34,28;592:38,35;596:73,48;602:40,35;610:50,40;620:40,45;632:50,55;640:52,50;647:26,22;654:48,40;665:43,55;672:46,38;680:58,44;690:40,46;697:46,48;700:72,50;707:62,55;715:50,45;725:32,42;729:52,45;732:55,68;735:52,42;742:50,40;750:65,55;760:50,42;768:52,40;778:56,34;786:45,30;795:40,38;805:48,36;815:50,34;822:45,30;827:50,32;832:30,34;840:42,42;850:36,38;858:25,35;866:20,24;875:30,26;885:16,18;893:26,28;897:65,65;900:64,55;905:32,38;915:45,42;919:73,45;925:55,48;935:50,50;944:70,50;952:50,50;960:36,40;967:64,62;975:55,50;985:48,40;992:45,38;1000:32,40;1008:28,30;1017:70,48;1022:48,42;1030:36,40;1040:58,42;1045:35,40;1055:48,45;1065:50,48;1075:50,42;1085:42,40;1095:22,25;1103:55,35;1115:58,52;1123:68,50;1130:48,38;1140:40,35;1150:32,35;1160:30,38;1170:50,48;1177:53,42;1183:20,34;1190:48,45;1200:50,50;1210:45,34;1217:20,25;1224:12,12;1229:42,50;1240:40,48;1250:40,38;1260:44,38;1270:38,38;1280:36,32;1292:25,34;1300:40,28;1306:26,34;1315:38,38;1325:32,35;1331:40,32;1340:30,33;1350:28,28;1360:22,22;1375:17,19;1385:10,14;1395:6,7;1405:2,2;1412:0,0;1440:0,0'],
  right: ['0:26,22;7:10,18;10:25,16;19:26,30;28:18,30;35:15,25;43:15,26;52:24,22;62:15,20;73:25,22;82:15,24;88:23,15;100:22,22;108:10,24;115:19,16;130:28,18;138:24,25;150:26,20;160:12,18;168:14,18;172:20,32;180:22,22;190:12,18;199:5,6;202:42,30;211:48,30;220:46,34;223:42,44;232:26,32;238:40,38;247:34,43;252:22,30;262:54,50;265:47,52;270:28,35;280:38,30;292:30,28;300:24,24;306:14,16;318:15,14;323:14,14;325:53,38;330:40,34;336:24,28;346:30,24;355:38,30;361:24,28;367:36,20;376:28,32;388:20,28;400:36,22;410:12,14;420:40,28;428:38,34;433:41,34;442:28,22;450:34,32;460:20,26;472:16,16;478:8,10;490:34,32;498:30,22;505:24,22;515:36,26;525:30,26;535:22,22;542:12,18;550:30,25;558:20,20;567:18,18;573:20,24;580:30,38;585:14,18;595:22,22;604:18,26;612:10,14;622:5,8;626:51,50;630:30,30;634:46,32;640:28,26;644:46,30;650:22,28;656:48,34;662:48,40;667:53,44;671:48,56;676:28,28;684:25,24;692:28,30;700:40,40;706:34,32;715:22,30;722:14,18;732:24,24;742:14,10;746:46,34;752:20,34;757:50,30;764:38,26;775:32,30;785:38,20;792:28,24;802:18,20;812:24,24;821:30,28;832:10,18;844:30,24;856:28,30;866:34,28;874:36,28;884:28,18;893:6,14;900:14,14;908:22,20;918:32,22;924:22,24;928:38,38;934:18,24;943:28,20;957:24,22;966:10,16;974:36,28;985:34,24;995:30,28;1005:24,25;1015:30,25;1026:20,20;1030:10,8;1033:50,45;1036:54,40;1040:35,30;1046:28,38;1056:34,38;1068:42,40;1080:46,46;1084:46,30;1092:28,30;1106:42,34;1116:28,32;1126:26,30;1140:22,24;1156:38,24;1166:26,22;1176:22,24;1186:26,22;1198:10,14;1206:22,14;1213:18,18;1218:43,42;1223:35,26;1232:35,28;1240:28,22;1252:36,24;1262:22,18;1272:18,18;1277:55,50;1281:26,28;1290:28,36;1302:32,30;1306:63,48;1310:34,30;1318:30,32;1326:32,32;1330:50,32;1334:32,34;1346:36,34;1356:16,28;1364:28,24;1370:40,32;1378:26,24;1390:22,26;1402:34,38;1410:26,30;1420:36,24;1430:20,18;1440:24,15;1448:20,12;1451:5,5;1457:5,5;1460:44,34;1466:26,20;1476:28,24;1484:24,20;1490:22,24;1497:14,16',
    '0:15,22;5:26,28;15:18,20;24:8,8;31:10,10;34:52,30;40:30,22;48:36,45;55:35,35;62:46,45;70:42,42;78:36,40;88:36,38;95:22,22;103:16,18;112:38,30;122:28,28;130:22,18;135:16,20;138:40,52;142:18,24;150:16,15;153:52,38;160:40,35;168:38,35;175:25,28;184:34,24;188:22,26;197:36,22;205:32,26;217:46,40;224:42,30;232:15,18;242:32,24;252:42,28;260:26,26;268:36,40;276:25,34;288:15,20;298:9,8;305:22,24;312:38,25;320:25,25;333:42,34;345:28,24;355:32,26;364:22,24;368:63,58;372:42,32;384:36,28;392:12,22;397:42,44;404:28,28;415:28,28;424:14,20;427:58,54;430:36,30;440:32,42;448:32,44;455:56,48;465:46,40;470:56,44;480:40,38;490:50,48;497:28,20;502:12,10;505:42,46;515:36,38;525:26,30;538:35,28;548:40,26;560:28,35;570:20,24;585:20,24;593:12,20;597:50,44;603:35,24;615:28,30;625:32,26;640:38,25;648:10,12;651:70,54;655:40,32;664:44,46;672:44,46;678:36,50;685:55,45;693:40,40;701:58,50;710:38,40;718:42,30;727:10,30;733:48,36;740:42,30;750:38,38;760:44,38;770:44,44;778:42,42;785:26,26;800:26,18;815:22,16;824:28,22;827:50,45;832:26,25;845:30,18;858:22,22;866:12,22;870:36,28;876:22,24;884:30,22;893:10,24;898:52,30;904:26,26;908:26,26;911:50,80;914:42,32;925:36,42;935:42,44;945:42,44;952:40,42;960:20,30;974:44,32;982:30,30;992:30,22;1000:10,12;1005:6,8;1012:20,24;1015:56,30;1022:36,32;1032:36,32;1040:28,22;1048:34,28;1062:34,24;1076:36,22;1085:34,18;1095:12,14;1104:40,28;1113:50,38;1118:42,28;1126:28,35;1140:26,30;1150:18,20;1158:6,8;1166:12,12;1169:53,80;1172:40,40;1180:34,26;1188:24,38;1196:50,38;1205:34,30;1214:18,20;1222:30,22;1230:32,34;1240:22,30;1250:20,22;1262:26,34;1270:20,20;1285:16,20;1295:24,18;1305:14,22;1313:26,24;1325:30,20;1332:20,16;1340:10,10;1352:6,6;1365:4,4;1380:2,2;1393:0,0;1440:0,0']
};
function drawWave(id, parts, mid, offset) {
  const points = parts.flatMap((text, i) => text.split(';').map(p => {
    const [x, v] = p.split(':'), [up, down] = v.split(',').map(Number);
    return { x: Math.round(halves[i].start + x / halves[i].scale), up, down };
  }));
  let seed = mid, k = 0, d = '';
  const noise = () => { seed = (seed * 16807) % 2147483647; return seed / 2147483647; };
  for (let x = 0; x < 1012; x++) {
    while (k < points.length - 2 && points[k + 1].x <= x) k++;
    const a = points[k], b = points[k + 1], t = Math.min(1, Math.max(0, (x - a.x) / (b.x - a.x || 1)));
    const amp = key => { const v = a[key] + (b[key] - a[key]) * t; return Math.round(x === a.x ? v : v * (.8 + .26 * noise())); };
    d += `M${x} ${mid - amp('up')}h1V${mid + 1 + amp('down')}h-1z`;
  }
  let grid = '';
  for (let i = 0; i < 25; i++) grid += `M${Math.round(i * 40.97)}.5 0V226`;
  [-80, -57, -41, -15, 15, 41, 57, 80].forEach(y => { grid += `M0 ${mid + y}.5H1012`; });
  fill(id, `<g shape-rendering="crispEdges"><path d="${grid}" stroke="#043404" fill="none"/><path d="${d}" fill="#4bf5a8"/><path d="M0 ${mid}.5H1012" stroke="#5cc98f"/><path d="M0 ${mid - 101}.5H1012M0 ${mid + 101}.5H1012" stroke="#fff"/><path d="M540.500 ${offset}V226" stroke="#ffff00" stroke-dasharray="1 3"/></g>`);
}
drawWave('wave-left', peaks.left, 112, 2);
drawWave('wave-right', peaks.right, 113, 0);

const db = ['-3', '-6', '-9', '-18', '-∞', '-18', '-9', '-6', '-3'].map(v => `<span class="tick">${v}</span>`).join('');
fill('scale-left', '<span>dB</span>' + db);
fill('scale-right', db + '<span>dB</span>');

let ticks = '';
for (let i = 0; i < 124; i++) ticks += `M${Math.round(i * 8.194)}.5 0v${i % 5 ? 2 : 4}`;
fill('time-ticks', `<path d="${ticks}" stroke="#dfe3e8" shape-rendering="crispEdges"/>`);
let times = '<span class="first">hms</span>';
for (let s = 5; s <= 115; s += 5) times += `<span>${Math.floor(s / 60)}:${String(s % 60).padStart(2, '0')}.0</span>`;
fill('time-labels', times + '<span class="last">hms</span>');

let marks = '', labels = '<span class="first">dB</span>';
for (let i = 0; i <= 72; i++) marks += `M${Math.round(1.5 + i * 17.24)}.5 0v${i % 3 ? 1 : 3}`;
for (let v = -69; v <= 0; v += 3) labels += `<span>${v}</span>`;
fill('level-ticks', `<path d="${marks}" stroke="#dfe3e8" shape-rendering="crispEdges"/>`);
fill('level-labels', labels);
```
